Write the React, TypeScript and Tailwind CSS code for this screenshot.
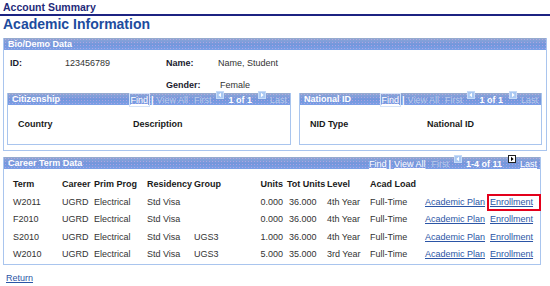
import type { ReactNode } from "react";

type TermRow = {
  term: string;
  career: string;
  prog: string;
  residency: string;
  group: string;
  units: string;
  totUnits: string;
  level: string;
  load: string;
};

const termRows: readonly TermRow[] = [
  { term: "W2011", career: "UGRD", prog: "Electrical", residency: "Std Visa", group: "", units: "0.000", totUnits: "36.000", level: "4th Year", load: "Full-Time" },
  { term: "F2010", career: "UGRD", prog: "Electrical", residency: "Std Visa", group: "", units: "0.000", totUnits: "36.000", level: "4th Year", load: "Full-Time" },
  { term: "S2010", career: "UGRD", prog: "Electrical", residency: "Std Visa", group: "UGS3", units: "1.000", totUnits: "36.000", level: "4th Year", load: "Full-Time" },
  { term: "W2010", career: "UGRD", prog: "Electrical", residency: "Std Visa", group: "UGS3", units: "5.000", totUnits: "35.000", level: "3rd Year", load: "Full-Time" },
];

const barBg =
  "[background-image:radial-gradient(rgba(236,176,232,0.45)_0.7px,transparent_0.9px),linear-gradient(to_bottom,#9aaccb_0px,#86a2d9_2px,#7396dc_55%,#7ba0e6_100%)] [background-size:3px_3px,100%_100%]";

function NavArrow({ dir, active = false }: { dir: "left" | "right"; active?: boolean }) {
  return (
    <svg width="8" height="8" viewBox="0 0 8 8" className="block shrink-0">
      <rect
        x="0.5"
        y="0.5"
        width="7"
        height="7"
        fill={active ? "#ffffff" : "#a9c8f2"}
        stroke={active ? "#222222" : "#c6dbf7"}
      />
      <path d={dir === "left" ? "M5 1.8 L2.4 4 L5 6.2 Z" : "M3 1.8 L5.6 4 L3 6.2 Z"} fill={active ? "#000000" : "#ffffff"} />
    </svg>
  );
}

function PanelBar({ title, children, titlePad }: { title: string; children?: ReactNode; titlePad: string }) {
  return (
    <div className={`flex h-[12px] items-center justify-between ${barBg}`}>
      <span className={`${titlePad} text-[9px] font-bold leading-[12px] text-white`}>{title}</span>
      {children}
    </div>
  );
}

function GridNav({ range, live }: { range: string; live: boolean }) {
  const off = "text-[#b9cbea]";
  return (
    <div className="flex h-[12px] items-start pr-[3px] text-[9px] leading-[12px]">
      <span
        className={
          live
            ? "mt-[1px] text-white underline"
            : "mt-[1px] px-[1px] text-white underline outline outline-1 outline-[#d5e2f7]"
        }
      >
        Find
      </span>
      <span className="mt-[1px] ml-[2px] font-bold text-white">|</span>
      <span className={`mt-[1px] ml-[3px] ${live ? "text-white underline" : off}`}>View All</span>
      <span className={`mt-[1px] ml-[6px] ${off}`}>First</span>
      <span className="ml-[5px] mt-[-2px]">
        <NavArrow dir="left" />
      </span>
      <span className="mt-[1px] ml-[4px] font-bold text-white">{range}</span>
      <span className="ml-[6px] mt-[-2px]">
        <NavArrow dir="right" active={live} />
      </span>
      <span className={`mt-[1px] ml-[4px] ${live ? "text-white underline" : off}`}>Last</span>
    </div>
  );
}

export default function App() {
  return (
    <div className="h-[286px] w-[550px] overflow-hidden bg-white font-['Liberation_Sans',Arial,sans-serif] text-[9px] text-[#2b2b2b]">
      <div className="h-[16px] border-b-2 border-[#1c2382] px-[3px] pt-[1px] text-[10.5px] font-bold leading-[13px] text-[#1f2b7a]">
        Account Summary
      </div>
      <h1 className="h-[16px] px-[3px] text-[14px] font-bold leading-[16px] text-[#1d4c9e]">Academic Information</h1>

      <section className="mt-[6px] ml-[3px] w-[544px] border-x border-b border-[#a9c5ee] pb-[5px]">
        <PanelBar title="Bio/Demo Data" titlePad="pl-[4px]" />
        <div className="pt-[6px] pl-[6px]">
          <div className="flex h-[14px] items-center leading-[14px]">
            <span className="w-[55px] font-bold text-[#1a1a2e]">ID:</span>
            <span className="w-[101px] text-[#333]">123456789</span>
            <span className="w-[52px] font-bold text-[#1a1a2e]">Name:</span>
            <span className="text-[#333]">Name, Student</span>
          </div>
          <div className="mt-[8px] flex h-[14px] items-center leading-[14px]">
            <span className="w-[156px]" />
            <span className="w-[54px] font-bold text-[#1a1a2e]">Gender:</span>
            <span className="text-[#333]">Female</span>
          </div>
        </div>

        <div className="mt-[1px] flex gap-[8px] pl-[3px]">
          <div className="h-[52px] w-[284px] border-x border-b border-[#a9c5ee]">
            <PanelBar title="Citizenship" titlePad="pl-[4px]">
              <GridNav range="1 of 1" live={false} />
            </PanelBar>
            <div className="flex pt-[12px] pl-[10px] font-bold leading-[14px] text-[#1a1a1a]">
              <span className="w-[115px]">Country</span>
              <span>Description</span>
            </div>
          </div>
          <div className="h-[52px] w-[243px] border-x border-b border-[#a9c5ee]">
            <PanelBar title="National ID" titlePad="pl-[4px]">
              <GridNav range="1 of 1" live={false} />
            </PanelBar>
            <div className="flex pt-[12px] pl-[10px] font-bold leading-[14px] text-[#1a1a1a]">
              <span className="w-[117px]">NID Type</span>
              <span>National ID</span>
            </div>
          </div>
        </div>
      </section>

      <section className="mt-[6px] ml-[3px] w-[538px] border-x border-b border-[#a9c5ee]">
        <PanelBar title="Career Term Data" titlePad="pl-[4px]">
          <GridNav range="1-4 of 11" live />
        </PanelBar>
        <div className="pt-[7px] pl-[9px]">
          <div className="flex h-[17.5px] items-center font-bold text-[#1a1a1a]">
            <span className="w-[49px]">Term</span>
            <span className="w-[32px]">Career</span>
            <span className="w-[53px]">Prim Prog</span>
            <span className="w-[47px]">Residency</span>
            <span className="w-[60px]">Group</span>
            <span className="w-[29px] text-right">Units</span>
            <span className="ml-[4px] w-[40px]">Tot Units</span>
            <span className="w-[43px]">Level</span>
            <span className="w-[55px]">Acad Load</span>
          </div>
          {termRows.map((row, i) => (
            <div key={row.term} className="flex h-[17.5px] items-center text-[#333]">
              <span className="w-[49px]">{row.term}</span>
              <span className="w-[32px]">{row.career}</span>
              <span className="w-[53px]">{row.prog}</span>
              <span className="w-[47px]">{row.residency}</span>
              <span className="w-[60px]">{row.group}</span>
              <span className="w-[29px] text-right">{row.units}</span>
              <span className="ml-[4px] w-[40px] pl-[2px]">{row.totUnits}</span>
              <span className="w-[43px]">{row.level}</span>
              <span className="w-[55px]">{row.load}</span>
              <a className="w-[65px] text-[#2b55a6] underline">Academic Plan</a>
              <span className="relative">
                <a className="text-[#2b55a6] underline">Enrollment</a>
                {i === 0 ? (
                  <span className="absolute top-[-2px] left-[-3px] h-[17px] w-[54px] border-2 border-[#e3001b]" />
                ) : null}
              </span>
            </div>
          ))}
        </div>
      </section>

      <div className="mt-[7px] pl-[6px] leading-[12px]">
        <a className="text-[#2b55a6] underline">Return</a>
      </div>
    </div>
  );
}
